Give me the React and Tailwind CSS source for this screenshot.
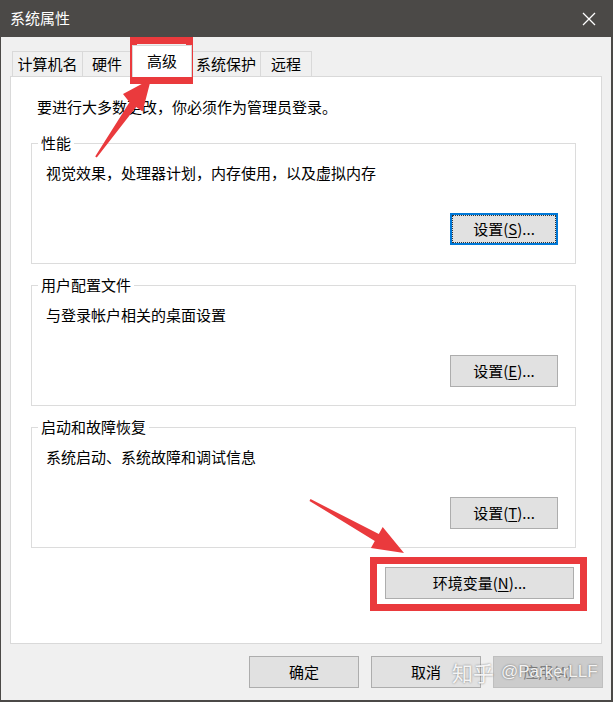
import React from "react";

const cjk = "font-['Microsoft_YaHei_UI','Noto_Sans_CJK_SC',sans-serif]";

const tabs = [
  { label: "计算机名", w: "w-[71px]" },
  { label: "硬件", w: "w-[50px]" },
  { label: "高级", w: "w-[60px]", active: true },
  { label: "系统保护", w: "w-[70px]" },
  { label: "远程", w: "w-[52px]" },
];

const groups = [
  { title: "性能", desc: "视觉效果，处理器计划，内存使用，以及虚拟内存", key: "S", focused: true },
  { title: "用户配置文件", desc: "与登录帐户相关的桌面设置", key: "E" },
  { title: "启动和故障恢复", desc: "系统启动、系统故障和调试信息", key: "T" },
];

// Win10 style push button
const WinButton = ({ children, focused, className = "" }) => (
  <div
    className={`flex items-center justify-center bg-[#e1e1e1] text-[15px] text-black ${
      focused ? "border-2 border-[#0078d7]" : "border border-[#adadad]"
    } ${className}`}
  >
    {focused ? (
      <div className="flex h-full w-full items-center justify-center border border-dotted border-[#333]">
        {children}
      </div>
    ) : (
      children
    )}
  </div>
);

const GroupBox = ({ title, desc, hotkey, focused }) => (
  <div className="relative ml-[20px] h-[121px] w-[545px] border border-[#dcdcdc]">
    <span className="absolute -top-[12px] left-[6px] bg-white px-[3px] text-[15px] leading-[22px] text-black">
      {title}
    </span>
    <p className="ml-[14px] mt-[18px] text-[15px] leading-[22px] text-black">{desc}</p>
    <div className="mr-[17px] mt-[29px] flex justify-end">
      <WinButton focused={focused} className="h-[32px] w-[108px]">
        设置(<span className="underline underline-offset-2">{hotkey}</span>)...
      </WinButton>
    </div>
  </div>
);

const Arrows = () => (
  <svg className="pointer-events-none absolute left-0 top-0" width="613" height="702">
    <polygon
      fill="#ea3a3d"
      points="96.8,157.6 136.1,106.9 142.6,111.5 151,79 123,94 129.5,102.3 95.2,156.4"
    />
    <polygon
      fill="#ea3a3d"
      points="310.5,499.1 378.8,533.9 382.7,526.9 404,553 370.9,547.9 374.8,540.9 309.5,500.9"
    />
  </svg>
);

export default function App() {
  return (
    <div className={`relative h-[702px] w-[613px] overflow-hidden bg-[#4b4947] ${cjk}`}>
      {/* title bar */}
      <div className="flex h-[37px] items-center justify-between pl-[10px] pr-[17px]">
        <span className="text-[15px] text-white">系统属性</span>
        <svg width="14" height="14" viewBox="0 0 14 14">
          <path d="M1 1 L13 13 M13 1 L1 13" stroke="#fff" strokeWidth="1.3" />
        </svg>
      </div>

      {/* body */}
      <div className="ml-[1px] h-[663px] w-[610px] bg-[#f0f0f0] pl-[9px]">
        {/* tabs */}
        <div className="flex h-[39px] items-end pl-[2px]">
          {tabs.map((t) =>
            t.active ? (
              <div
                key={t.label}
                className={`${t.w} relative z-10 -mb-[1px] flex h-[32px] items-center justify-center border border-b-0 border-[#d9d9d9] bg-white text-[15px] text-black`}
              >
                {t.label}
              </div>
            ) : (
              <div
                key={t.label}
                className={`${t.w} -ml-[1px] flex h-[25px] items-center justify-center border border-b-0 border-[#d9d9d9] bg-[#f0f0f0] text-[15px] text-black first:ml-0`}
              >
                {t.label}
              </div>
            )
          )}
        </div>

        {/* tab page */}
        <div className="h-[568px] w-[592px] border border-[#d9d9d9] bg-white">
          <p className="ml-[26px] mt-[19px] text-[15px] leading-[22px] text-black">
            要进行大多数更改，你必须作为管理员登录。
          </p>
          <div className="mt-[25px] flex flex-col gap-[21px]">
            {groups.map((g) => (
              <GroupBox key={g.title} title={g.title} desc={g.desc} hotkey={g.key} focused={g.focused} />
            ))}
          </div>
          <div className="mr-[27px] mt-[19px] flex justify-end">
            <WinButton className="h-[32px] w-[189px]">
              环境变量(<span className="underline underline-offset-2">N</span>)...
            </WinButton>
          </div>
        </div>

        {/* dialog buttons */}
        <div className="mt-[12px] flex justify-end gap-[12px] pr-[8px]">
          <WinButton className="h-[32px] w-[110px]">确定</WinButton>
          <WinButton className="h-[32px] w-[110px]">取消</WinButton>
          <div className="flex h-[32px] w-[110px] items-center justify-center border border-[#bfbfbf] bg-[#cccccc] text-[15px] text-[#838383]">
            应用(A)
          </div>
        </div>
      </div>

      {/* annotations */}
      <div className="absolute left-[130px] top-[37px] h-[47px] w-[63px] border-[7px] border-[#ea3a3d]" />
      <div className="absolute left-[370px] top-[557px] h-[54px] w-[217px] border-[7px] border-[#ea3a3d]" />
      <Arrows />

      {/* watermark */}
      <div className="absolute left-[452px] top-[660px] flex items-center gap-[7px] whitespace-nowrap text-white/90 [text-shadow:0_0_2px_rgba(0,0,0,0.5)]">
        <span className="text-[21px] leading-[24px]">知乎</span>
        <span className="text-[17px] leading-[24px] font-['Liberation_Sans',sans-serif]">@ParkerLLF</span>
      </div>
    </div>
  );
}
